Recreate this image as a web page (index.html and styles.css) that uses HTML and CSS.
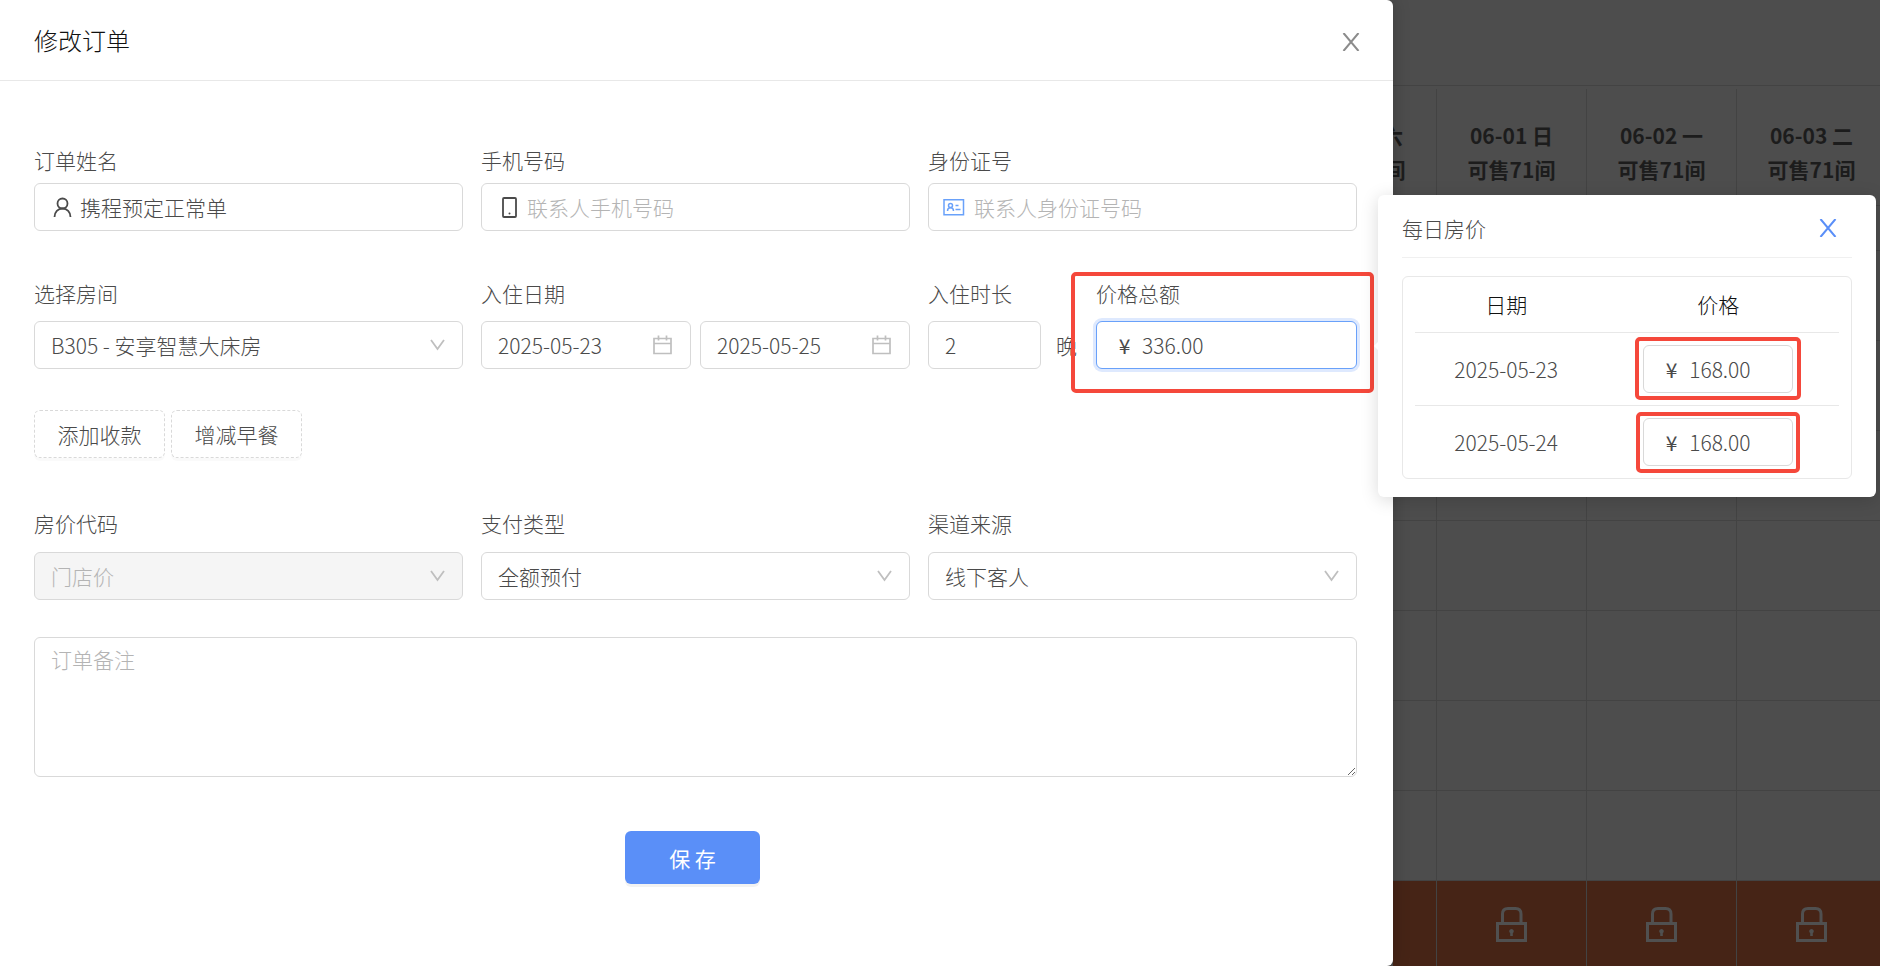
FILE: index.html
```html
<!DOCTYPE html>
<html lang="zh-CN">
<head>
    <meta charset="UTF-8">
    <meta name="viewport" content="width=device-width, initial-scale=1.0">
    <title>修改订单</title>
    <link rel="stylesheet" href="styles.css">
</head>
<body>
    <svg class="sprite" aria-hidden="true">
        <symbol id="icon-down" viewBox="0 0 15 12">
            <path d="M1 1l6.500 9L14 1" fill="none" stroke="currentColor" stroke-width="1.800"/>
        </symbol>
        <symbol id="icon-calendar" viewBox="0 0 19 20">
            <path d="M1 3.500h17v15H1zM1 8.500h17M5.500 0.500v5M13.500 0.500v5" fill="none" stroke="currentColor" stroke-width="1.700"/>
        </symbol>
        <symbol id="icon-close" viewBox="0 0 18 18">
            <path d="M1.500 0l15 18M16.500 0l-15 18" fill="none" stroke="currentColor" stroke-width="2"/>
        </symbol>
        <symbol id="icon-lock" viewBox="0 0 31 35">
            <path d="M1.500 16.500h28v17h-28zM6.500 16V7q0-5.500 5.500-5.500h7.500q5.500 0 5.500 5.500v9" fill="none" stroke="currentColor" stroke-width="3"/>
            <path d="M15.500 22a2.300 2.300 0 0 1 1.300 4.200V29h-2.600v-2.800a2.300 2.300 0 0 1 1.300-4.200z" fill="currentColor"/>
        </symbol>
    </svg>

    <div class="page">
        <main class="drawer">
            <header class="drawer-header">
                <h1>修改订单</h1>
                <button type="button" class="close-btn" aria-label="关闭"><svg><use href="#icon-close"/></svg></button>
            </header>

            <form class="order-form">
                <div class="row row-contact">
                    <div class="field">
                        <label for="name">订单姓名</label>
                        <div class="control">
                            <svg class="prefix" viewBox="0 0 21 21"><circle cx="10.500" cy="6.500" r="5" fill="none" stroke="currentColor" stroke-width="1.800"/><path d="M2.500 20c0-5 3.500-8.500 8-8.500s8 3.500 8 8.500" fill="none" stroke="currentColor" stroke-width="1.800"/></svg>
                            <input type="text" id="name" value="携程预定正常单">
                        </div>
                    </div>
                    <div class="field">
                        <label for="phone">手机号码</label>
                        <div class="control">
                            <svg class="prefix" viewBox="0 0 21 21"><rect x="4" y="1" width="13" height="19" rx="1" fill="none" stroke="currentColor" stroke-width="1.800"/><circle cx="10.500" cy="16.500" r="1" fill="currentColor"/></svg>
                            <input type="text" id="phone" placeholder="联系人手机号码">
                        </div>
                    </div>
                    <div class="field">
                        <label for="idcard">身份证号</label>
                        <div class="control">
                            <svg class="prefix prefix-card" viewBox="3 0 21 21"><g fill="none" stroke="currentColor" stroke-width="1.500"><path d="M1 2.800h19.500v15H1z"/><circle cx="7.500" cy="8.500" r="2"/><path d="M4.500 14c0-4.300 6-4.300 6 0M12.500 8.500h3M12.500 12.500h5"/></g></svg>
                            <input type="text" id="idcard" placeholder="联系人身份证号码">
                        </div>
                    </div>
                </div>

                <div class="row row-stay">
                    <div class="field">
                        <label for="room">选择房间</label>
                        <div class="control">
                            <select id="room"><option>B305 - 安享智慧大床房</option></select>
                            <svg class="arrow"><use href="#icon-down"/></svg>
                        </div>
                    </div>
                    <div class="field">
                        <label for="checkin">入住日期</label>
                        <div class="dates">
                            <div class="control">
                                <input type="text" id="checkin" value="2025-05-23">
                                <svg class="calendar-icon"><use href="#icon-calendar"/></svg>
                            </div>
                            <div class="control">
                                <input type="text" value="2025-05-25" aria-label="离店日期">
                                <svg class="calendar-icon"><use href="#icon-calendar"/></svg>
                            </div>
                        </div>
                    </div>
                    <div class="stay">
                        <div class="field field-nights">
                            <label for="nights">入住时长</label>
                            <div class="nights">
                                <div class="control"><input type="text" id="nights" value="2"></div>
                                <span>晚</span>
                            </div>
                        </div>
                        <div class="field field-total">
                            <label for="total">价格总额</label>
                            <div class="control control-active">
                                <span class="prefix">¥</span>
                                <input type="text" id="total" value="336.00">
                            </div>
                            <div class="mark mark-total"></div>
                        </div>
                    </div>
                </div>

                <div class="extras">
                    <button type="button">添加收款</button>
                    <button type="button">增减早餐</button>
                </div>

                <div class="row row-channel">
                    <div class="field">
                        <label for="ratecode">房价代码</label>
                        <div class="control control-disabled">
                            <select id="ratecode" disabled><option>门店价</option></select>
                            <svg class="arrow"><use href="#icon-down"/></svg>
                        </div>
                    </div>
                    <div class="field">
                        <label for="paytype">支付类型</label>
                        <div class="control">
                            <select id="paytype"><option>全额预付</option></select>
                            <svg class="arrow"><use href="#icon-down"/></svg>
                        </div>
                    </div>
                    <div class="field">
                        <label for="channel">渠道来源</label>
                        <div class="control">
                            <select id="channel"><option>线下客人</option></select>
                            <svg class="arrow"><use href="#icon-down"/></svg>
                        </div>
                    </div>
                </div>

                <textarea class="remark" placeholder="订单备注" aria-label="订单备注"></textarea>

                <div class="actions">
                    <button type="submit" class="save-btn">保 存</button>
                </div>
            </form>
        </main>

        <!-- dimmed room calendar behind the drawer -->
        <aside class="calendar">
            <div class="calendar-top"></div>
            <table>
                <thead>
                    <tr>
                        <th>05-31 六<br>可售71间</th>
                        <th>06-01 日<br>可售71间</th>
                        <th>06-02 一<br>可售71间</th>
                        <th>06-03 二<br>可售71间</th>
                    </tr>
                </thead>
                <tbody>
                    <tr class="half"><td></td><td></td><td></td><td></td></tr>
                    <tr><td></td><td></td><td></td><td></td></tr>
                    <tr><td></td><td></td><td></td><td></td></tr>
                    <tr><td></td><td></td><td></td><td></td></tr>
                    <tr><td></td><td></td><td></td><td></td></tr>
                    <tr><td></td><td></td><td></td><td></td></tr>
                    <tr><td></td><td></td><td></td><td></td></tr>
                    <tr><td></td><td></td><td></td><td></td></tr>
                    <tr class="locked">
                        <td></td>
                        <td><svg><use href="#icon-lock"/></svg></td>
                        <td><svg><use href="#icon-lock"/></svg></td>
                        <td><svg><use href="#icon-lock"/></svg></td>
                    </tr>
                </tbody>
            </table>
        </aside>
    </div>

    <section class="popover">
        <header class="popover-header">
            <h2>每日房价</h2>
            <button type="button" class="close-btn close-blue" aria-label="关闭"><svg><use href="#icon-close"/></svg></button>
        </header>
        <div class="price-box">
            <table class="price-table">
                <thead>
                    <tr><th>日期</th><th>价格</th></tr>
                </thead>
                <tbody>
                    <tr>
                        <td>2025-05-23</td>
                        <td>
                            <div class="control">
                                <span class="prefix">¥</span>
                                <input type="text" value="168.00" aria-label="2025-05-23 价格">
                                <div class="mark mark-day"></div>
                            </div>
                        </td>
                    </tr>
                    <tr>
                        <td>2025-05-24</td>
                        <td>
                            <div class="control">
                                <span class="prefix">¥</span>
                                <input type="text" value="168.00" aria-label="2025-05-24 价格">
                                <div class="mark mark-last"></div>
                            </div>
                        </td>
                    </tr>
                </tbody>
            </table>
        </div>
    </section>
</body>
</html>
```

FILE: styles.css
```css
* {
    box-sizing: border-box;
}

body {
    margin: 0;
    background: #4d4d4d;
    font-family: "Noto Sans CJK SC", "Noto Sans", sans-serif;
    font-size: 21px;
    font-weight: 300;
    line-height: 30px;
    color: #4a4a4a;
}

input,
select,
textarea,
button {
    font: inherit;
    color: inherit;
}

svg {
    display: block;
}

.sprite {
    position: absolute;
    width: 0;
    height: 0;
}

.page {
    display: flex;
    height: 100vh;
    min-height: 920px;
    overflow: hidden;
}

/* drawer */
.drawer {
    flex: 1;
    min-width: 0;
    background: #fff;
    border-radius: 0 6px 6px 0;
    box-shadow: 0 0 18px rgba(0, 0, 0, 0.2);
    z-index: 1;
}

.drawer-header {
    display: flex;
    justify-content: space-between;
    align-items: center;
    height: 81px;
    padding: 0 33px 0 34px;
    border-bottom: 1px solid #e8e8e8;
}

.drawer-header h1 {
    margin: 0;
    font-size: 24px;
    font-weight: 300;
    color: #111;
}

.close-btn {
    padding: 3px 0 0;
    border: 0;
    background: none;
    color: #8c8c8c;
    cursor: pointer;
}

.close-btn svg {
    width: 18px;
    height: 18px;
}

.close-blue {
    padding: 0;
    color: #5a8ff8;
}

.order-form {
    padding: 64px 36px 0 34px;
}

.row {
    display: grid;
    grid-template-columns: repeat(3, 1fr);
    gap: 18px;
    margin-bottom: 47px;
}

.field label {
    display: block;
    margin-bottom: 13px;
}

.row-contact label {
    margin-bottom: 8px;
}

.control {
    position: relative;
    display: flex;
    align-items: center;
    height: 48px;
    padding-left: 16px;
    border: 1px solid #d9d9d9;
    border-radius: 6px;
    background: #fff;
}

.control input,
.control select {
    flex: 1;
    width: 0;
    height: 100%;
    padding: 0;
    border: 0;
    outline: 0;
    background: none;
    appearance: none;
    opacity: 1;
}

.prefix {
    flex: none;
    width: 23px;
    height: 21px;
    margin-right: 6px;
    line-height: 21px;
    text-align: center;
    font-weight: 400;
}

.prefix-card {
    overflow: visible;
    color: #69a1fa;
}

::placeholder {
    color: #b4b4b4;
    opacity: 1;
}

.control .arrow {
    position: absolute;
    right: 17px;
    width: 15px;
    height: 12px;
    color: #bfbfbf;
    pointer-events: none;
}

.calendar-icon {
    width: 19px;
    height: 20px;
    margin-right: 18px;
    color: #bfbfbf;
}

.control-active {
    border-color: #69a1fa;
    box-shadow: 0 0 0 3px #dee9fe;
}

.control-disabled {
    background: #f5f5f5;
    color: #b4b4b4;
}

.dates {
    display: grid;
    grid-template-columns: 1fr 1fr;
    gap: 9px;
}

.stay {
    display: flex;
}

.field-nights {
    width: 168px;
}

.field-total {
    position: relative;
    flex: 1;
}

.nights {
    display: flex;
    align-items: center;
    gap: 15px;
}

.nights .control {
    width: 113px;
}

.row-stay {
    margin-bottom: 41px;
}

.extras {
    display: flex;
    gap: 6px;
    margin-bottom: 50px;
}

.extras button {
    height: 48px;
    padding: 0 22px;
    border: 1px dashed #d9d9d9;
    border-radius: 6px;
    background: #fff;
    box-shadow: 0 3px 0 rgba(0, 0, 0, 0.02);
    min-width: 131px;
    cursor: pointer;
}

.row-channel {
    margin-bottom: 37px;
}

.row-channel label {
    margin-bottom: 14px;
}

.remark {
    display: block;
    width: 100%;
    height: 140px;
    padding: 6px 16px;
    border: 1px solid #d9d9d9;
    border-radius: 6px;
    outline: 0;
    resize: vertical;
}

.actions {
    display: flex;
    justify-content: center;
    padding: 54px 6px 0 0;
}

.save-btn {
    width: 135px;
    height: 53px;
    border: 0;
    border-radius: 6px;
    background: #5a8ff8;
    box-shadow: 0 3px 0 rgba(0, 0, 0, 0.05);
    color: #fff;
    font-weight: 400;
    cursor: pointer;
}

/* red highlight frames */
.mark {
    position: absolute;
    border: 4px solid #f5483b;
    border-radius: 5px;
    pointer-events: none;
}

.mark-total {
    inset: -6px -17px -24px -25px;
}

.mark-day {
    inset: -9px -9px -8px -9px;
}

.mark-last {
    inset: -7px -8px -8px -8px;
}

/* calendar */
.calendar {
    width: 487px;
    overflow: hidden;
}

.calendar-top {
    height: 86px;
    margin-bottom: 3px;
    border-bottom: 1px solid #434343;
}

.calendar table {
    width: 600px;
    margin-left: -106px;
    table-layout: fixed;
    border-collapse: separate;
    border-spacing: 0;
}

.calendar th,
.calendar td {
    padding: 0;
    border-right: 1px solid #434343;
    border-bottom: 1px solid #434343;
}

.calendar th {
    height: 117px;
    padding-top: 10px;
    font-weight: 700;
    line-height: 34px;
    color: #1c1c1c;
}

.calendar td {
    height: 90px;
}

.calendar .half td {
    height: 45px;
}

.calendar .locked td {
    height: 87px;
    background: #462416;
    color: #505050;
}

.locked svg {
    width: 31px;
    height: 35px;
    margin: 0 auto;
}

/* daily price popover */
.popover {
    position: absolute;
    top: 195px;
    right: 4px;
    z-index: 2;
    width: 498px;
    padding: 0 24px 18px;
    border-radius: 6px;
    background: #fff;
    box-shadow: 0 3px 18px rgba(0, 0, 0, 0.15);
}

.popover::before {
    content: "";
    position: absolute;
    top: 146px;
    left: -2px;
    width: 10px;
    height: 10px;
    background: #fff;
    transform: rotate(45deg);
}

.popover-header {
    display: flex;
    justify-content: space-between;
    align-items: center;
    height: 63px;
    margin-bottom: 18px;
    padding: 4px 15px 0 0;
    border-bottom: 1px solid #f0f0f0;
}

.popover-header h2 {
    margin: 0;
    font-size: 21px;
    font-weight: 300;
}

.price-box {
    padding: 0 12px;
    border: 1px solid #e8e8e8;
    border-radius: 6px;
}

.price-table {
    width: 100%;
    table-layout: fixed;
    border-collapse: separate;
    border-spacing: 0;
    text-align: center;
}

.price-table th {
    height: 56px;
    padding: 0 0 2px;
    border-bottom: 1px solid #e8e8e8;
    font-weight: 300;
    color: #111;
}

.price-table th:first-child {
    width: 43%;
}

.price-table td {
    padding: 12px 0;
    border-bottom: 1px solid #e8e8e8;
}

.price-table tr:last-child td {
    border-bottom: 0;
}

.price-table thead tr:last-child th {
    border-bottom: 1px solid #e8e8e8;
}

.price-table .control {
    width: 150px;
    margin: 0 auto;
}
```
